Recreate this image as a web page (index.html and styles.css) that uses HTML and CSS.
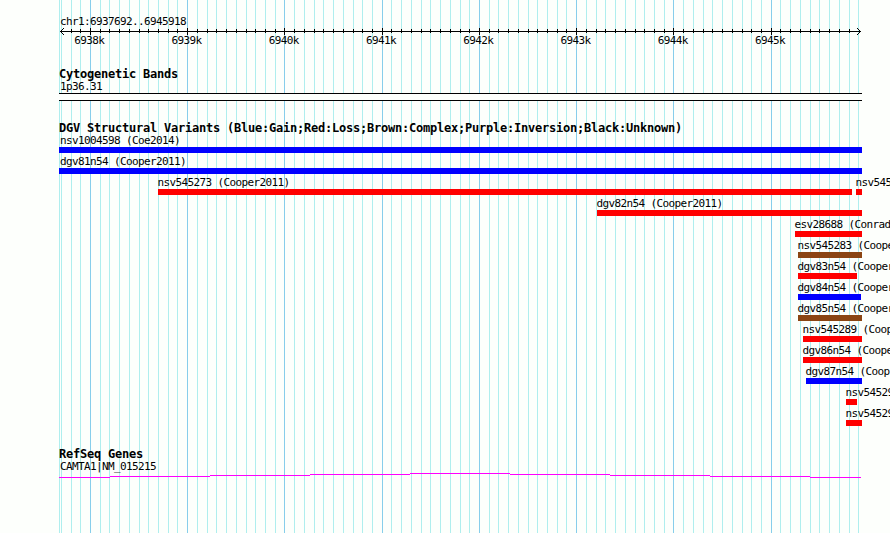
FILE: index.html
```html
<!DOCTYPE html>
<html lang="en">
<head>
<meta charset="utf-8">
<title>chr1:6937692..6945918</title>
<link rel="stylesheet" href="styles.css">
</head>
<body>
<svg class="gridlines" width="890" height="533" shape-rendering="crispEdges" aria-hidden="true">
  <path id="minor" class="minor"/>
  <path id="major" class="major"/>
</svg>
<main class="browser">
  <header class="region">
    <div class="label">chr1:6937692..6945918</div>
    <svg class="ruler" width="803" height="7" shape-rendering="crispEdges">
      <path id="ticks" class="ink"/>
      <path class="ink" d="M1 3h801v1H1zM2 2h1v1H2zM3 1h1v1H3zM4 0h1v1H4zM2 4h1v1H2zM3 5h1v1H3zM4 6h1v1H4zM800 2h1v1h-1zM799 1h1v1h-1zM798 0h1v1h-1zM800 4h1v1h-1zM799 5h1v1h-1zM798 6h1v1h-1z"/>
    </svg>
    <div class="scale label">
      <span>6938k</span><span>6939k</span><span>6940k</span><span>6941k</span><span>6942k</span><span>6943k</span><span>6944k</span><span>6945k</span>
    </div>
  </header>
  <section class="track bands">
    <h2>Cytogenetic Bands</h2>
    <div class="label">1p36.31</div>
    <div class="band"></div>
  </section>
  <section class="track variants">
    <h2>DGV Structural Variants (Blue:Gain;Red:Loss;Brown:Complex;Purple:Inversion;Black:Unknown)</h2>
    <div class="row"><div class="variant gain flush" style="width:803px">nsv1004598 (Coe2014)</div></div>
    <div class="row"><div class="variant gain flush" style="width:803px">dgv81n54 (Cooper2011)</div></div>
    <div class="row"><div class="variant loss" style="margin-left:99px;width:694px">nsv545273 (Cooper2011)</div><div class="variant loss" style="margin-left:4px;width:6px">nsv545</div></div>
    <div class="row"><div class="variant loss" style="margin-left:538px;width:265px">dgv82n54 (Cooper2011)</div></div>
    <div class="row"><div class="variant loss" style="margin-left:736px;width:67px">esv28688 (Conrad</div></div>
    <div class="row"><div class="variant complex" style="margin-left:739px;width:64px">nsv545283 (Coope</div></div>
    <div class="row"><div class="variant loss" style="margin-left:739px;width:59px">dgv83n54 (Cooper</div></div>
    <div class="row"><div class="variant gain" style="margin-left:739px;width:63px">dgv84n54 (Cooper</div></div>
    <div class="row"><div class="variant complex" style="margin-left:739px;width:64px">dgv85n54 (Cooper</div></div>
    <div class="row"><div class="variant loss" style="margin-left:744px;width:59px">nsv545289 (Coop</div></div>
    <div class="row"><div class="variant loss" style="margin-left:744px;width:59px">dgv86n54 (Coope</div></div>
    <div class="row"><div class="variant gain" style="margin-left:747px;width:56px">dgv87n54 (Coop</div></div>
    <div class="row"><div class="variant loss" style="margin-left:787px;width:11px">nsv54529</div></div>
    <div class="row"><div class="variant loss" style="margin-left:787px;width:16px">nsv54529</div></div>
  </section>
  <section class="track genes">
    <h2>RefSeq Genes</h2>
    <div class="label">CAMTA1|NM_015215</div>
    <svg class="gene" width="802" height="5" shape-rendering="crispEdges">
      <path d="M0 4h51v1H0zM51 3h100v1H51zM151 2h100v1H151zM251 1h100v1H251zM351 0h100v1H351zM451 1h100v1H451zM551 2h100v1H551zM651 3h100v1H651zM751 4h51v1h-51z"/>
    </svg>
  </section>
</main>
<script src="ruler.js"></script>
</body>
</html>
```
FILE: styles.css
```css
html {
  background: #fdfffc;
}
html, body {
  margin: 0;
  height: 533px;
  overflow: hidden;
}
body {
  position: relative;
  z-index: 0;
  color: #000;
  font: 11px/13px "DejaVu Sans Mono", monospace;
  letter-spacing: -0.622px;
  white-space: nowrap;
}
svg { display: block; }
.gridlines { position: absolute; left: 0; top: 0; z-index: -1; }
.minor { fill: #afeeee; }
.major { fill: #87ceeb; }
.ink { fill: #000; }

.browser { padding: 15px 0 0 59px; }
.label { padding-left: 1px; height: 13px; }
.region { height: 53px; }
.scale { display: flex; padding-left: 15.3px; margin-top: -1px; }
.scale span { flex: 0 0 97.25px; }

h2 {
  margin: 0;
  height: 13px;
  font-size: 12px;
  line-height: 13px;
  font-weight: bold;
  letter-spacing: -0.224px;
}
.bands { height: 54px; }
.bands .label { margin-top: -1px; }
.band {
  width: 803px;
  height: 6px;
  border-top: 1px solid #000;
  border-bottom: 1px solid #000;
  background: #fdfffc;
}
.variants { height: 326px; }
.variants h2 { height: 12px; }
.row { display: flex; height: 21px; }
.variant {
  flex: none;
  box-sizing: border-box;
  height: 19px;
  border-bottom: 6px solid;
  text-indent: -0.5px;
}
.flush { text-indent: 1px; }
.gain { border-bottom-color: #00f; }
.loss { border-bottom-color: #f00; }
.complex { border-bottom-color: #8b4513; }

.genes .label { margin-top: -1px; }
.gene { fill: #f0f; }
```
FILE: ruler.js
```js
// Grid lines every 100 bp, stronger ones every 1000 bp.
const start = 6937692, end = 6945918, left = 60, perBase = 800 / 8226;
let minor = "M59 0h1v533h-1z", major = "", ticks = "";
for (let bp = 6937700; bp <= end; bp += 100) {
  const x = Math.round(left + (bp - start) * perBase);
  const line = `M${x} 0h1v533h-1z`;
  if (bp % 1000 === 0) {
    major += line;
    ticks += `M${x - 59} 0h1v7h-1z`;
  } else {
    minor += line;
    if (x > 65 && x < 855) ticks += `M${x - 59} 1h1v4h-1z`;
  }
}
document.getElementById("minor").setAttribute("d", minor);
document.getElementById("major").setAttribute("d", major);
document.getElementById("ticks").setAttribute("d", ticks);
```
